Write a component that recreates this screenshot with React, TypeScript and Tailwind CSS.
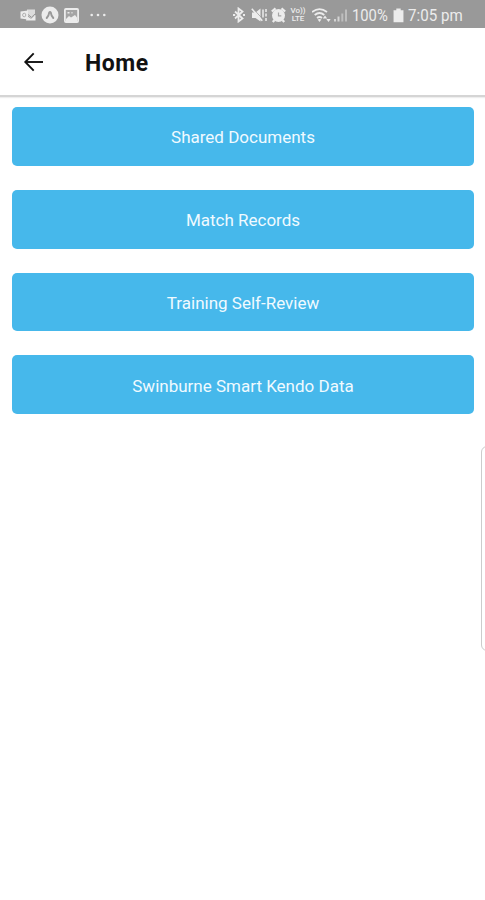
const menuItems = [
  "Shared Documents",
  "Match Records",
  "Training Self-Review",
  "Swinburne Smart Kendo Data",
];

function StatusBar() {
  return (
    <div className="flex h-7 items-center bg-[#999999] pt-0.5 pl-5 text-[#ececec]">
      {/* Notifications */}
      <svg className="h-4 w-4 shrink-0" viewBox="0 0 16 16" fill="currentColor">
        <path d="M7 2.500h8v6L11 11 7 8z" opacity=".8" />
        <path d="M7 9l4 2.800L15.500 8v5.500H6z" />
        <path d="M.5 4.500L8 3.500v9L.5 11.500z" />
        <ellipse cx="4.200" cy="8" rx="1.600" ry="1.800" fill="none" stroke="#b0b0b0" strokeWidth="1" />
        <path d="M8 7.500l3.500 2.800L15 7" fill="none" stroke="#999999" strokeWidth="1" />
      </svg>
      <svg className="ml-[5px] h-[18px] w-[18px] shrink-0" viewBox="0 0 18 18">
        <circle cx="9" cy="9" r="8.500" fill="currentColor" />
        <path d="M5.700 12Q7.900 9.500 8.200 6.600Q9 5.400 9.800 6.600Q10.100 9.500 12.300 12" fill="none" stroke="#999999" strokeWidth="1.900" strokeLinecap="round" />
      </svg>
      <svg className="ml-[5px] h-[15px] w-[15px] shrink-0" viewBox="0 0 15 15">
        <rect x=".9" y="1" width="13.200" height="13" rx="1" fill="#a4a4a4" stroke="currentColor" strokeWidth="1.800" />
        <path d="M3.500 4h2v1.500h-2zM7.500 4h1v1.500h-1zM2 11l3-3 2 1.500L11 7l2 2.500V13H2z" fill="currentColor" />
      </svg>
      <svg className="ml-[11px] h-1 w-4 shrink-0" viewBox="0 0 16 4" fill="currentColor">
        <circle cx="1.700" cy="2" r="1.300" />
        <circle cx="8" cy="2" r="1.300" />
        <circle cx="14.300" cy="2" r="1.300" />
      </svg>

      {/* System icons */}
      <svg className="ml-[127px] h-4 w-3 shrink-0" viewBox="0 0 12 16" fill="none" stroke="currentColor" strokeWidth="1.800">
        <path d="M2 4.500l7.500 7-4 3V1.500l4 3-7.500 7" />
        <path d="M0 8h2.200M10 8h2" strokeWidth="2" />
      </svg>
      <svg className="ml-[6px] h-4 w-4 shrink-0" viewBox="0 0 16 16" fill="currentColor">
        <path d="M1 5.500h3.500L9.500 1.500v13L4.500 11H1z" />
        <path d="M2.500 2.200l8 8.500" stroke="#999999" strokeWidth=".8" />
        <path d="M.8 1.800l10.500 12" stroke="currentColor" strokeWidth="1.600" />
        <path d="M12 2.500v8M15 2v3M15 6.500v3M15 11v3" stroke="currentColor" strokeWidth="1.500" />
      </svg>
      <svg className="ml-1 h-4 w-[15px] shrink-0" viewBox="0 0 15 16" fill="currentColor">
        <circle cx="7.500" cy="8.500" r="6.500" />
        <path d="M.8 4.500L4.500 1.300M10.500 1.300l3.700 3.200M3.500 13l-1.700 2M11.500 13l1.700 2" stroke="currentColor" strokeWidth="2.200" />
        <path d="M7.500 5.500v3.300h2.800" fill="none" stroke="#a5a5a5" strokeWidth="1.200" />
      </svg>
      <div className="ml-1 flex w-4 shrink-0 flex-col items-center font-['Roboto',sans-serif] text-[8px] leading-[8px] font-medium">
        <span>Vo))</span>
        <span>LTE</span>
      </div>
      <svg className="ml-[6px] h-4 w-5 shrink-0" viewBox="0 0 20 16" fill="none" stroke="currentColor" strokeWidth="1.800">
        <path d="M0 5Q7.500 -.8 15 5M2.700 8Q7.500 4 12.300 8M5 11Q7.500 9 10 11" />
        <path d="M7.500 15l-1.900-2.500q1.900-1.200 3.800 0z" fill="currentColor" stroke="none" />
        <path d="M13 8.500l2.200 3h-4.400zM16.500 15l-2.200-3h4.400z" fill="currentColor" stroke="none" />
      </svg>
      <svg className="ml-px h-4 w-[15px] shrink-0" viewBox="0 0 15 16" fill="currentColor">
        <path d="M1 12h2v2.500H1zM4.500 9.500h2v5h-2z" opacity=".7" />
        <path d="M8.300 6.500h2v8h-2zM12 2.500h2v12h-2z" opacity=".45" />
      </svg>
      <span className="ml-1 w-[37px] origin-left scale-x-[.87] font-['Roboto',sans-serif] text-[17px] leading-6 whitespace-nowrap">100%</span>
      <svg className="ml-1 h-[15px] w-[11px] shrink-0" viewBox="0 0 10 15" preserveAspectRatio="none" fill="currentColor">
        <path d="M3 .5h4v1.700h2.500v12H.5v-12H3z" />
      </svg>
      <span className="ml-1 origin-left scale-x-[.89] font-['Roboto',sans-serif] text-[17px] leading-6 whitespace-nowrap">7:05 pm</span>
    </div>
  );
}

function Header() {
  return (
    <header className="flex h-[69px] items-center border-b-2 border-[#d5d5d5] pl-[23px] shadow-[0_1px_1px_#eeeeee]">
      <button aria-label="Back" className="h-5 w-5">
        <svg className="h-5 w-5" viewBox="0 0 20 20" fill="none" stroke="#111111" strokeWidth="1.900">
          <path d="M10.700 1.400L2.300 10l8.400 8.600" />
          <path d="M2.500 10h17.500" />
        </svg>
      </button>
      <h1 className="ml-[42px] pt-1 font-['Roboto',sans-serif] text-[23px] leading-7 font-bold tracking-[.5px] text-[#111111]">Home</h1>
    </header>
  );
}

export default function App() {
  return (
    <div className="relative h-[900px] w-[485px] overflow-hidden bg-white">
      <StatusBar />
      <Header />

      <main className="flex flex-col gap-6 pt-[10px] pr-[11px] pl-3">
        {menuItems.map((item) => (
          <button
            key={item}
            className="h-[58.750px] rounded-[5px] bg-[#46b8eb] pt-0.5 font-['Roboto',sans-serif] text-[17px] leading-6 text-[#f0faff]"
          >
            {item}
          </button>
        ))}
      </main>

      {/* Edge panel handle */}
      <div className="absolute top-[446px] -right-2 h-[205px] w-[12px] rounded-md border border-[#cccccc] bg-white" />
    </div>
  );
}
